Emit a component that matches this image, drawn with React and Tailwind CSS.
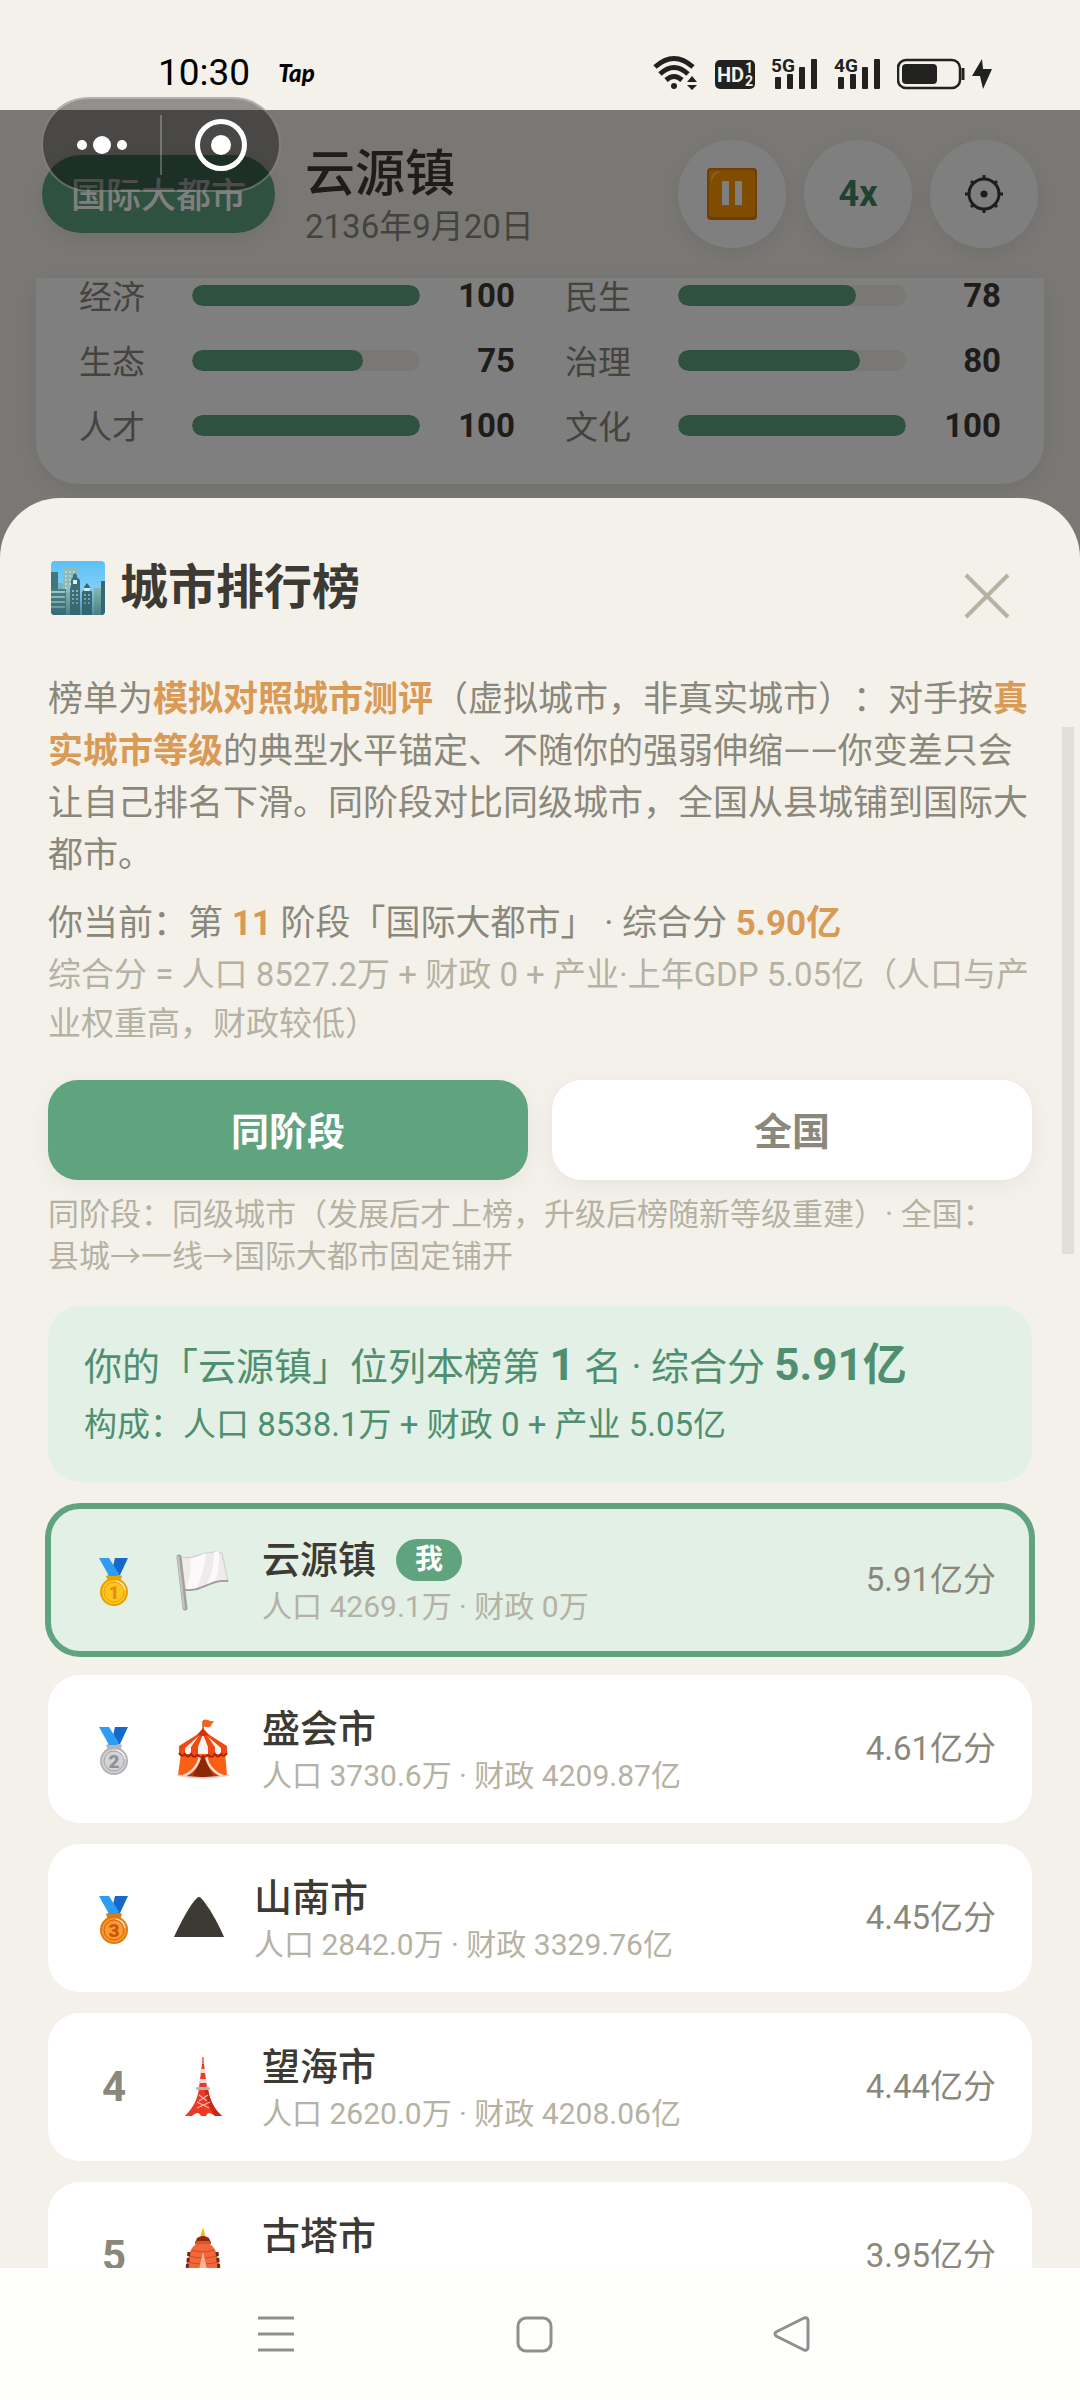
import { useState } from "react"

const leftStats = [
    { label: "经济", value: 100 },
    { label: "生态", value: 75 },
    { label: "人才", value: 100 },
]

const rightStats = [
    { label: "民生", value: 78 },
    { label: "治理", value: 80 },
    { label: "文化", value: 100 },
]

const cities = [
    { rank: 1, icon: "flag", name: "云源镇", detail: "人口 4269.1万 · 财政 0万", score: "5.91亿分", mine: true },
    { rank: 2, icon: "tent", name: "盛会市", detail: "人口 3730.6万 · 财政 4209.87亿", score: "4.61亿分" },
    { rank: 3, icon: "mountain", name: "山南市", detail: "人口 2842.0万 · 财政 3329.76亿", score: "4.45亿分" },
    { rank: 4, icon: "tower", name: "望海市", detail: "人口 2620.0万 · 财政 4208.06亿", score: "4.44亿分" },
    { rank: 5, icon: "pagoda", name: "古塔市", detail: "", score: "3.95亿分" },
]

const medalColors = {
    1: { rim: "#e8a200", face: "#ffc61a", ring: "#f09a12", digit: "#e88a1c" },
    2: { rim: "#b4b4b8", face: "#d3d3d6", ring: "#a3a3a8", digit: "#8f8f94" },
    3: { rim: "#e07a10", face: "#fb9a2e", ring: "#cc5f10", digit: "#c9540c" },
}

function Medal({ rank }) {
    const c = medalColors[rank]
    return (
        <svg width="60" height="60" viewBox="0 0 60 60" aria-label={`第${rank}名`}>
            <path d="M22 26 Q30 21 38 26 L36 32 L24 32 Z" fill={c.rim} />
            <path d="M31 8 H44 L36 25 H27 Z" fill="#1769c9" />
            <path d="M15 8 H25 L35 24 L33 26 H25 Z" fill="#2e9bf4" />
            <circle cx="30" cy="42" r="14" fill={c.rim} />
            <circle cx="30" cy="42" r="12" fill={c.face} />
            <circle cx="30" cy="42" r="10" fill="none" stroke={c.ring} strokeWidth="1" />
            <path d="M32 31 a11 11 0 0 1 9 9" fill="none" stroke="#fff" strokeOpacity="0.7" strokeWidth="1.5" />
            <text x="30" y="49" textAnchor="middle" fontSize="19" fontWeight="900" fill={c.digit}>{rank}</text>
        </svg>
    )
}

function FlagIcon() {
    return (
        <svg width="62" height="64" viewBox="0 0 62 64" aria-hidden="true">
            <path d="M9 9 C22 13 30 1 50 5 C52 14 54 24 56 33 C38 31 30 44 13 41 Z" fill="#efebeb" stroke="#d8cfd0" strokeWidth="1.2" />
            <path d="M18 11 C26 9 28 7 34 5 C33 18 29 30 25 40 C22 41 17 42 14 41 C18 30 20 20 18 11 Z" fill="#fbf9f9" />
            <path d="M42 4 H47 C48 14 46 26 43 33 L35 36 C40 26 42 14 42 4 Z" fill="#fbf9f9" />
            <path d="M12 42 C31 44 38 31 56 33" fill="none" stroke="#9c9c9c" strokeWidth="1.8" />
            <path d="M7 9 L13 60" stroke="#a2a2a2" strokeWidth="5" strokeLinecap="round" />
            <path d="M6 9 L12 60" stroke="#c6c6c6" strokeWidth="2" strokeLinecap="round" />
        </svg>
    )
}

function TentIcon() {
    return (
        <svg width="62" height="64" viewBox="0 0 62 64" aria-hidden="true">
            <path d="M31 14 V4" stroke="#b5643a" strokeWidth="1.5" />
            <path d="M31 3 C35 1 37 5 42 4 L38 10 C35 11 33 9 31 10 Z" fill="#f4631f" />
            <path d="M9 36 H53 L55 58 C44 62 18 62 6 58 Z" fill="#fb5f13" />
            <path d="M31 38 L42 60 H20 Z" fill="#8c2a08" />
            <path d="M31 38 L20 60 H14 C22 54 26 46 27 38 Z" fill="#cf2f0c" />
            <path d="M31 38 L42 60 H48 C40 54 36 46 35 38 Z" fill="#cf2f0c" />
            <path d="M28 38 C27 48 20 56 11 59 M34 38 C35 48 42 56 51 59" fill="none" stroke="#f6dcd3" strokeWidth="2.5" />
            <path d="M7 30 L27 17 H36 L55 30 V37 L7 37 Z" fill="#fdf3ef" />
            <path d="M7 29 L26 17 L28 18 L13 31 V37 H7 Z" fill="#ee4a14" />
            <path d="M19 30 L28 17 H31 L26 30 V38 H19 Z" fill="#ee4a14" />
            <path d="M55 29 L36 17 L34 18 L49 31 V37 H55 Z" fill="#ee4a14" />
            <path d="M43 30 L34 17 H31 L36 30 V38 H43 Z" fill="#ee4a14" />
            <path d="M7 36 Q10 41 13 37 Q16 42 19 37 Q22 42 25 38 Q31 42 36 38 Q40 42 43 37 Q46 42 49 37 Q52 41 55 36" fill="none" stroke="#a82307" strokeWidth="2" />
            <path d="M31 11 L37 18 Q31 20 25 18 Z" fill="#d7300c" />
            <path d="M5 58 Q30 64 57 58" fill="none" stroke="#e7cfc6" strokeWidth="1.5" />
        </svg>
    )
}

function MountainIcon() {
    return (
        <svg width="54" height="64" viewBox="0 0 54 64" aria-hidden="true">
            <path d="M2 51 C9 36 17 20 25 12 Q27 10 29 12 C37 21 45 35 52 51 Z" fill="#3c3a33" />
        </svg>
    )
}

function TowerIcon() {
    return (
        <svg width="62" height="64" viewBox="0 0 62 64" aria-hidden="true">
            <path d="M31 2 V12" stroke="#e25a48" strokeWidth="1.5" />
            <path d="M30 9 H32 L35 33 H27 Z" fill="#e83a28" />
            <path d="M29 14 H33 L34 18 H28 Z M28 24 H34 L35 28 H28 Z" fill="#f0d9d6" />
            <path d="M27 34 H36 C38 46 43 55 50 61 H43 C39 58 36 56 34 61 H29 C27 56 23 58 20 61 H13 C20 54 25 46 27 34 Z" fill="#ea3a25" />
            <path d="M33 35 H36 C38 46 43 55 50 61 H43 C38 54 34 46 33 35 Z" fill="#c52a17" />
            <path d="M27 40 L35 46 M36 40 L27 46 M25 47 L37 53 M38 47 L25 53" stroke="#f6b5a8" strokeWidth="1.2" />
            <rect x="24" y="32" width="14" height="3" rx="1.5" fill="#b9b4b6" />
        </svg>
    )
}

function PagodaIcon() {
    return (
        <svg width="62" height="64" viewBox="0 0 62 64" aria-hidden="true">
            <path d="M31 3 L34 14 H28 Z" fill="#f8b42c" />
            <path d="M25 14 Q31 10 37 14 L39 19 H23 Z" fill="#8f2a0d" />
            <path d="M23 17 H39 V20 Q31 23 23 20 Z" fill="#d5552b" />
            <path d="M24 20 H38 C44 24 46 32 48 45 L50 62 H12 L14 45 C16 32 18 24 24 20 Z" fill="#f2683c" />
            <path d="M20 26 Q31 30 42 26 M17 32 Q31 36 45 32 M15 38 Q31 42 47 38 M14 44 Q31 48 48 44 M13 50 H49 M13 56 H49" fill="none" stroke="#c94f26" strokeWidth="1.2" />
            <path d="M31 28 L39 62 H23 Z" fill="#ffb597" />
            <path d="M17 28 L13 62 M45 28 L49 62" stroke="#6d2a18" strokeWidth="3" strokeDasharray="4 2" />
        </svg>
    )
}

const cityIcons = {
    flag: FlagIcon,
    tent: TentIcon,
    mountain: MountainIcon,
    tower: TowerIcon,
    pagoda: PagodaIcon,
}

function CityscapeIcon() {
    return (
        <svg width="60" height="60" viewBox="0 0 60 60" aria-hidden="true">
            <defs>
                <linearGradient id="sky" x1="0" y1="0" x2="0" y2="1">
                    <stop offset="0" stopColor="#5bc1f7" />
                    <stop offset="1" stopColor="#a6dcf5" />
                </linearGradient>
                <linearGradient id="haze" x1="0" y1="0" x2="0" y2="1">
                    <stop offset="0.5" stopColor="#2f6470" stopOpacity="0" />
                    <stop offset="1" stopColor="#2f6470" stopOpacity="0.7" />
                </linearGradient>
                <clipPath id="frame">
                    <rect x="3" y="3" width="54" height="54" rx="4" />
                </clipPath>
            </defs>
            <g clipPath="url(#frame)">
                <rect x="3" y="3" width="54" height="54" fill="url(#sky)" />
                <path d="M15 10 H29 V57 H15 Z" fill="#8fbcb9" />
                <path d="M18 13 V34 M22 13 V34 M26 13 V34" stroke="#c3dcd6" strokeWidth="1.5" strokeDasharray="2 2" />
                <path d="M3 14 H10 V57 H3 Z" fill="#3f7680" />
                <path d="M10 25 H15 V57 H10 Z" fill="#7db3b5" />
                <path d="M46 30 H53 V57 H46 Z" fill="#86b7b5" />
                <path d="M23 22 L25 19 V17 L27 15 L29 17 V19 L32 22 V57 H22 V30 L23 28 Z" fill="#3c6f79" />
                <path d="M25 22 H29 V26 H25 Z" fill="#d8f0ee" />
                <path d="M25 32 V46 M29 32 V46" stroke="#b5d5cf" strokeWidth="1.5" strokeDasharray="2 2" />
                <path d="M34 34 L36 32 V29 L39 25 L42 29 V32 L44 34 V57 H34 Z" fill="#356a74" />
                <path d="M36 30 H42 V33 H36 Z" fill="#d8f0ee" />
                <path d="M37 36 V46 M41 36 V46" stroke="#b5d5cf" strokeWidth="1.5" strokeDasharray="2 2" />
                <path d="M3 31 H18 V57 H3 Z" fill="#4a8088" />
                <path d="M3 34 H17 M3 39 H17 M3 44 H17 M3 49 H17" stroke="#a7cfcb" strokeWidth="2" />
                <path d="M53 23 H57 V57 H53 Z" fill="#356a74" />
                <rect x="3" y="3" width="54" height="54" fill="url(#haze)" />
            </g>
        </svg>
    )
}

function SignalIcon({ label }) {
    return (
        <svg width="47" height="36" viewBox="0 0 47 36" fill="#21211f" aria-label={label}>
            <text x="0" y="18" fontSize="19" fontWeight="700" fontFamily="Roboto, sans-serif">{label}</text>
            <rect x="4" y="23" width="6" height="12" rx="1" />
            <rect x="16" y="20" width="6" height="15" rx="1" />
            <rect x="28" y="13" width="6" height="22" rx="1" />
            <rect x="40" y="5" width="6" height="30" rx="1" />
        </svg>
    )
}

function StatusBar() {
    return (
        <div className="flex h-[110px] shrink-0 items-end justify-between bg-[#f4f1ea] pr-[88px] pb-4 pl-[158px]">
            <div className="flex items-center gap-7 text-black">
                <span className="text-[37px] leading-[42px]">10:30</span>
                <span className="font-['Lato'] text-2xl leading-[38px] font-black italic">Tap</span>
            </div>
            <div className="flex items-center gap-4 pb-1">
                <svg width="46" height="36" viewBox="0 0 46 36" fill="none" stroke="#21211f" strokeWidth="5" aria-label="Wi-Fi">
                    <path d="M2 13 Q21 -4 40 13" />
                    <path d="M7 20 Q21 7 35 20" />
                    <path d="M13 26 Q21 19 29 26" />
                    <circle cx="21" cy="32" r="3" fill="#21211f" stroke="none" />
                    <path d="M39 22 L44 28 H34 Z M34 31 H44 L39 36 Z" fill="#21211f" stroke="none" />
                </svg>
                <svg width="40" height="36" viewBox="0 0 40 36" aria-label="HD">
                    <rect x="0" y="6" width="40" height="29" rx="5" fill="#21211f" />
                    <g fill="#f4f1ea" fontFamily="Roboto, sans-serif" fontWeight="700">
                        <text x="2" y="28" fontSize="20">HD</text>
                        <text x="30" y="19" fontSize="14">1</text>
                        <text x="30" y="32" fontSize="14">2</text>
                    </g>
                </svg>
                <SignalIcon label="5G" />
                <SignalIcon label="4G" />
                <svg width="95" height="36" viewBox="0 0 95 36" aria-label="电量">
                    <rect x="1" y="6" width="62" height="28" rx="8" fill="none" stroke="#21211f" strokeWidth="2.5" />
                    <rect x="5" y="10" width="35" height="20" rx="4" fill="#21211f" />
                    <path d="M66 14 V26" stroke="#21211f" strokeWidth="3" />
                    <path d="M85 5 L75 22 H83 L86 35 L95 15 H86 Z" fill="#21211f" />
                </svg>
            </div>
        </div>
    )
}

function StatColumn({ stats }) {
    return (
        <dl className="flex flex-1 flex-col gap-[30px]">
            {stats.map((stat) => (
                <div key={stat.label} className="flex h-[35px] items-center gap-7">
                    <dt className="w-[85px] shrink-0 pt-1 text-[33px] leading-[35px] text-[#8a877b]">{stat.label}</dt>
                    <dd className="flex flex-1 items-center gap-7">
                        <span className="h-[21px] flex-1 overflow-hidden rounded-full bg-[#f4f1ea]">
                            <span className="block h-full rounded-full bg-[#5fa37f]" style={{ width: `${stat.value}%` }} />
                        </span>
                        <span className="w-[67px] text-right text-[33px] leading-[35px] font-bold text-[#3c3a33]">{stat.value}</span>
                    </dd>
                </div>
            ))}
        </dl>
    )
}

function GameHeader() {
    return (
        <header className="flex h-[168px] items-center px-[42px]">
            <span className="rounded-full bg-[#5fa37f] px-[29px] pt-[18px] pb-3 text-[35px] leading-[48px] font-medium text-white shadow-[0_6px_24px_rgba(0,0,0,0.08)]">
                国际大都市
            </span>
            <div className="flex-1 pt-2 pl-[30px]">
                <h1 className="text-[50px] leading-[58px] font-medium text-[#3c3a33]">云源镇</h1>
                <p className="text-[33px] leading-[48px] text-[#8a877b]">2136年9月20日</p>
            </div>
            <div className="flex gap-[18px]">
                <button type="button" aria-label="暂停" className="flex size-[108px] items-center justify-center rounded-full bg-white shadow-[0_6px_24px_rgba(0,0,0,0.08)]">
                    <svg width="50" height="52" viewBox="0 0 50 52" aria-hidden="true">
                        <rect width="50" height="52" rx="4" fill="#e07c00" />
                        <rect x="2" y="2" width="46" height="47" rx="3" fill="#ff9800" />
                        <path d="M4 12 Q4 3 14 3 Q7 6 4 14 Z" fill="#ffc46b" />
                        <path d="M15 13 H22 V37 H15 Z M28 13 H35 V37 H28 Z" fill="#fff" />
                    </svg>
                </button>
                <button type="button" className="size-[108px] rounded-full bg-white text-[36px] font-bold text-[#3f8462] shadow-[0_6px_24px_rgba(0,0,0,0.08)]">
                    4x
                </button>
                <button type="button" aria-label="设置" className="flex size-[108px] items-center justify-center rounded-full bg-white shadow-[0_6px_24px_rgba(0,0,0,0.08)]">
                    <svg width="40" height="40" viewBox="0 0 40 40" fill="none" stroke="#3c3a33" strokeWidth="3" aria-hidden="true">
                        <circle cx="20" cy="20" r="15" />
                        <circle cx="20" cy="20" r="3.5" fill="#3c3a33" stroke="none" />
                        <path d="M20 1 V6 M20 34 V39 M1 20 H6 M34 20 H39 M7 7 L10 10 M30 30 L33 33 M33 7 L30 10 M10 30 L7 33" />
                    </svg>
                </button>
            </div>
        </header>
    )
}

// mini-program controls floating above the page
function Capsule() {
    return (
        <div className="absolute top-[97px] left-[41px] z-20 flex h-[95px] w-60 items-center rounded-full border-2 border-white/30 bg-black/40">
            <button type="button" aria-label="更多" className="flex h-full flex-1 items-center justify-center gap-[6px]">
                <span className="size-[10px] rounded-full bg-white" />
                <span className="size-[18px] rounded-full bg-white" />
                <span className="size-[10px] rounded-full bg-white" />
            </button>
            <span className="h-[60px] w-[2px] bg-white/25" />
            <button type="button" aria-label="关闭小程序" className="flex h-full flex-1 items-center justify-center">
                <span className="flex size-[52px] items-center justify-center rounded-full border-[5px] border-white">
                    <span className="size-5 rounded-full bg-white" />
                </span>
            </button>
        </div>
    )
}

function CityRow({ city }) {
    const Icon = cityIcons[city.icon]
    return (
        <li
            className={
                city.mine
                    ? "flex h-[148px] items-center gap-7 rounded-[32px] bg-[#e2f0e6] px-9 outline-[6px] -outline-offset-[3px] outline-[#5fa37f]"
                    : "flex h-[148px] items-center gap-7 rounded-[32px] bg-white px-9"
            }
        >
            <span className="flex w-[60px] shrink-0 justify-center text-[42px] leading-none font-bold text-[#8a877b]">
                {city.rank <= 3 ? <Medal rank={city.rank} /> : city.rank}
            </span>
            <Icon />
            <div className="flex-1">
                <div className="flex h-[54px] items-center gap-5">
                    <span className="text-[38px] leading-[54px] font-medium text-[#3c3a33]">{city.name}</span>
                    {city.mine ? (
                        <span className="rounded-full bg-[#5fa37f] px-[19px] text-[28px] leading-[42px] font-bold text-white">我</span>
                    ) : null}
                </div>
                <p className="h-10 text-[30px] leading-10 text-[#b5b2a3]">{city.detail}</p>
            </div>
            <span className="text-[33px] leading-[48px] text-[#8a877b]">{city.score}</span>
        </li>
    )
}

function RankingSheet() {
    const [tab, setTab] = useState("stage")

    const tabClass = (active) =>
        active
            ? "h-[100px] flex-1 rounded-[30px] bg-[#5fa37f] pt-1 text-[38px] font-bold text-white shadow-[0_6px_24px_rgba(0,0,0,0.05)]"
            : "h-[100px] flex-1 rounded-[30px] bg-white pt-1 text-[38px] font-bold text-[#8a877b] shadow-[0_6px_24px_rgba(0,0,0,0.05)]"

    return (
        <section
            aria-label="城市排行榜"
            className="absolute inset-x-0 bottom-0 h-[82%] overflow-hidden rounded-t-[60px] bg-[#f4f1ea] px-12 pt-12"
        >
            <div className="flex h-[84px] items-center justify-between">
                <h2 className="flex items-center gap-3 text-[48px] leading-[60px] font-bold text-[#3c3a33]">
                    <CityscapeIcon />
                    城市排行榜
                </h2>
                <button type="button" aria-label="关闭" className="mt-4 flex size-[90px] items-center justify-center">
                    <svg width="46" height="46" viewBox="0 0 46 46" stroke="#b5b2a3" strokeWidth="4" aria-hidden="true">
                        <path d="M2 2 L44 44 M44 2 L2 44" />
                    </svg>
                </button>
            </div>

            <div className="mt-11 text-[35px] leading-[52px] text-[#8a877b]">
                <p>
                    榜单为<b className="font-bold text-[#d89a54]">模拟对照城市测评</b>（虚拟城市，非真实城市）：对手按
                    <b className="font-bold text-[#d89a54]">真实城市等级</b>
                    的典型水平锚定、不随你的强弱伸缩——你变差只会让自己排名下滑。同阶段对比同级城市，全国从县城铺到国际大都市。
                </p>
                <p className="mt-4">
                    你当前：第 <b className="font-bold text-[#d89a54]">11</b> 阶段「国际大都市」 · 综合分{" "}
                    <b className="font-bold text-[#d89a54]">5.90亿</b>
                </p>
            </div>
            <p className="text-[33px] leading-[49px] text-[#b5b2a3]">
                综合分 = 人口 8527.2万 + 财政 0 + 产业·上年GDP 5.05亿（人口与产业权重高，财政较低）
            </p>

            <div className="mt-8 flex gap-6">
                <button type="button" aria-pressed={tab === "stage"} onClick={() => setTab("stage")} className={tabClass(tab === "stage")}>
                    同阶段
                </button>
                <button type="button" aria-pressed={tab === "nation"} onClick={() => setTab("nation")} className={tabClass(tab === "nation")}>
                    全国
                </button>
            </div>
            <p className="mt-[14px] pr-3 text-[31px] leading-[42px] text-[#b5b2a3]">
                同阶段：同级城市（发展后才上榜，升级后榜随新等级重建）· 全国：县城→一线→国际大都市固定铺开
            </p>

            <div className="mt-7 rounded-[32px] bg-[#e2f0e6] px-9 py-[30px] text-[#4f8f6f]">
                <p className="text-[38px] leading-[62px]">
                    你的「云源镇」位列本榜第 <b className="text-[44px] leading-none font-bold">1</b> 名 · 综合分{" "}
                    <b className="text-[44px] leading-none font-bold">5.91亿</b>
                </p>
                <p className="text-[33px] leading-[54px]">构成：人口 8538.1万 + 财政 0 + 产业 5.05亿</p>
            </div>

            <ol className="mt-6 flex flex-col gap-[21px]">
                {cities.map((city) => (
                    <CityRow key={city.rank} city={city} />
                ))}
            </ol>

            <div className="absolute top-[229px] right-[6px] h-[527px] w-3 bg-[#dfded8]" />
        </section>
    )
}

function NavBar() {
    return (
        <nav className="flex h-[132px] shrink-0 items-center bg-[#fefefc] pr-[159px] pl-[147px]">
            <button type="button" aria-label="最近任务" className="flex flex-1 justify-center">
                <svg width="38" height="38" viewBox="0 0 38 38" fill="none" stroke="#8f8f8f" strokeWidth="3" aria-hidden="true">
                    <path d="M1 3 H37 M1 19 H37 M1 35 H37" />
                </svg>
            </button>
            <button type="button" aria-label="主屏幕" className="flex flex-1 justify-center">
                <svg width="38" height="38" viewBox="0 0 38 38" fill="none" stroke="#8f8f8f" strokeWidth="3" aria-hidden="true">
                    <rect x="3" y="3" width="33" height="33" rx="8" />
                </svg>
            </button>
            <button type="button" aria-label="返回" className="flex flex-1 justify-center">
                <svg width="38" height="38" viewBox="0 0 38 38" fill="none" stroke="#8f8f8f" strokeWidth="3" strokeLinejoin="round" aria-hidden="true">
                    <path d="M3 17 L31 3 Q35 2 35 6 V32 Q35 36 31 35 L3 21 Q1 19 3 17 Z" />
                </svg>
            </button>
        </nav>
    )
}

function App() {
    return (
        <div className="relative flex h-screen flex-col overflow-hidden bg-[#f4f1ea] font-['Roboto','Noto_Sans_CJK_SC',sans-serif] [text-spacing-trim:space-all]">
            <StatusBar />
            <main className="relative min-h-0 flex-1 overflow-hidden">
                <GameHeader />
                <div className="px-9">
                    <div className="flex gap-[50px] rounded-b-[42px] bg-white px-[43px] pb-[41px] shadow-[0_6px_24px_rgba(0,0,0,0.08)]">
                        <StatColumn stats={leftStats} />
                        <StatColumn stats={rightStats} />
                    </div>
                </div>
                <div className="absolute inset-0 bg-black/50" />
                <RankingSheet />
            </main>
            <NavBar />
            <Capsule />
        </div>
    )
}

export default App
